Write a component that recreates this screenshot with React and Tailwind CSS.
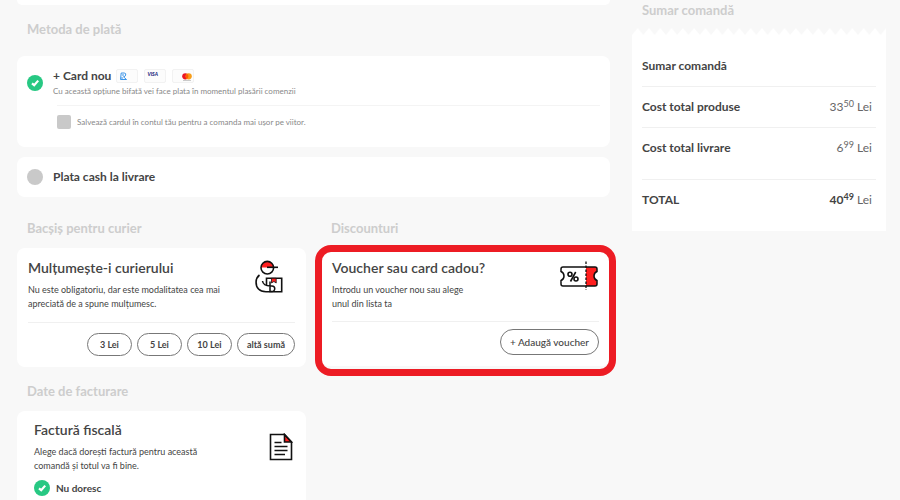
import React, { useState } from "react";

function SectionTitle({ children, className = "" }) {
  return (
    <h2 className={`px-2.5 text-[13px] leading-5 font-bold text-[#cdcdcd] ${className}`}>
      {children}
    </h2>
  );
}

function Radio({ id, name, checked, onChange }) {
  return (
    <span className="relative block size-4 shrink-0">
      <input
        id={id}
        name={name}
        type="radio"
        checked={checked}
        onChange={onChange}
        className="block size-4 appearance-none rounded-full bg-[#c9c9c9] checked:bg-[#27c883]"
      />
      {checked && (
        <svg viewBox="0 0 16 16" className="pointer-events-none absolute inset-0 size-4" aria-hidden="true">
          <path d="M5 8.300 7.200 10.200 11.200 5.600" fill="none" stroke="#fff" strokeWidth="2.200" />
        </svg>
      )}
    </span>
  );
}

function CourierIcon() {
  return (
    <svg viewBox="0 0 28 34" className="mt-0.5 h-[34px] w-7 shrink-0" fill="none" stroke="#111" strokeWidth="1.6" aria-hidden="true">
      <path d="M6 7.500a6.300 6.300 0 0 1 12.600 0Z" fill="#ff1f1f" stroke="none" />
      <circle cx="12.300" cy="7.700" r="6.300" />
      <path d="M12 7.300H23" />
      <path d="M4.500 15C0 18.500.2 25.500 3.500 29c2 2.200 4.500 2.700 7.500 2.700h15.700V18.300H11.500V25" />
      <path d="M7.500 21c.5 3.500 2.500 5 8 5M15 26v5.500h2a2.700 2.700 0 0 0 0-5.500ZM15 21.500V26" strokeWidth="1.500" />
      <path d="M16.500 18.300h4.700v4.700l-2.300-1.500-2.400 1.500Z" fill="#ff1f1f" strokeWidth=".8" />
    </svg>
  );
}

function VoucherIcon() {
  return (
    <svg viewBox="0 0 40 30" className="mt-[3px] h-[30px] w-10 shrink-0" fill="none" stroke="#111" strokeWidth="1.5" aria-hidden="true">
      <path d="M27 6h9q2 0 2 2v2.500c-4 1.500-4 7.500 0 9V23q0 2-2 2h-9Z" fill="#ff1f1f" stroke="none" />
      <path d="M4 6h32q2 0 2 2v2.500c-4 1.500-4 7.500 0 9V23q0 2-2 2H4q-2 0-2-2v-3.500c4-1.500 4-7.500 0-9V8q0-2 2-2Z" />
      <path d="M27 .5V29" strokeDasharray="2.500 1.500" strokeWidth="1.300" />
      <circle cx="11" cy="13.300" r="2" strokeWidth="1.600" />
      <circle cx="17" cy="18" r="2" strokeWidth="1.600" />
      <path d="M16.700 11 11.500 20.500" strokeWidth="1.600" />
    </svg>
  );
}

function InvoiceIcon() {
  return (
    <svg viewBox="0 0 24 28" className="h-7 w-6 shrink-0" fill="none" stroke="#111" strokeWidth="1.600" aria-hidden="true">
      <path d="M15.500 1.500V9H22.500Z" fill="#ff1f1f" />
      <path d="M1.500 1.500h14L22.500 9v17.500h-21Z" />
      <path d="M5.500 9.500h7M5.500 13.500h13M5.500 17.500h13M5.500 21.500h10.500" strokeWidth="1.400" />
    </svg>
  );
}

function CardBrands() {
  return (
    <span className="flex gap-1.5">
      <span className="flex h-3.5 w-[22px] items-center rounded-xs border border-[#f2f2f2] bg-[#fcfcfc] pl-0.5">
        <svg viewBox="0 0 8 8" className="size-2" fill="none" stroke="#2589e6" aria-hidden="true">
          <path d="M1.500 7.500 2.200 1h3q2 .2 1.500 2T4.500 4.800L7.500 7.500h-6M3 3h2M3 5v2" strokeWidth=".9" />
        </svg>
      </span>
      <span className="flex h-3.5 w-[22px] items-start rounded-xs border border-[#f2f2f2] bg-[#fcfcfc] pl-0.5 text-[5px] leading-2 font-black text-[#1d2a80] italic">
        VISA
      </span>
      <span className="flex h-3.5 w-[22px] items-center justify-end rounded-xs border border-[#f2f2f2] bg-[#fcfcfc] pr-px">
        <svg viewBox="0 0 10 9" className="h-[9px] w-2.5" aria-hidden="true">
          <circle cx="3.300" cy="4.300" r="3.100" fill="#eb1524" />
          <circle cx="6.700" cy="4.300" r="3.100" fill="#f79e1b" />
          <path d="M5 1.700a3.100 3.100 0 0 1 0 5.200 3.100 3.100 0 0 1 0-5.200" fill="#ff5f00" />
          <path d="M1 8.500h8" stroke="#999" strokeWidth=".5" />
        </svg>
      </span>
    </span>
  );
}

function SummaryRow({ label, whole, cents, strong, className = "" }) {
  return (
    <div className={`flex items-center justify-between border-t border-[#f0f0f0] pr-1 ${className}`}>
      <dt className="text-xs leading-5 font-bold">{label}</dt>
      <dd className="text-xs leading-5 text-[#666]">
        <span className={strong ? "font-bold text-[#444]" : ""}>
          {whole}
          <sup className="text-[9px]">{cents}</sup>
        </span>{" "}
        Lei
      </dd>
    </div>
  );
}

function OrderSummary() {
  return (
    <aside>
      <SectionTitle>Sumar comandă</SectionTitle>
      <svg className="mt-2 block h-[7px] w-full" aria-hidden="true">
        <defs>
          <pattern id="zigzag" width="11.300" height="7" patternUnits="userSpaceOnUse">
            <path d="M0 7 5.650 0 11.300 7Z" fill="#fff" />
          </pattern>
        </defs>
        <rect width="100%" height="7" fill="url(#zigzag)" />
      </svg>
      <div className="bg-white px-2.5 pt-[21px] pb-[21px]">
        <h3 className="pb-2.5 text-xs leading-5 font-bold">Sumar comandă</h3>
        <dl>
          <SummaryRow label="Cost total produse" whole="33" cents="50" className="py-2.5" />
          <SummaryRow label="Cost total livrare" whole="6" cents="99" className="pt-2.5 pb-[21px]" />
          <SummaryRow label="TOTAL" whole="40" cents="49" strong className="pt-2.5" />
        </dl>
      </div>
    </aside>
  );
}

const tips = ["3 Lei", "5 Lei", "10 Lei", "altă sumă"];

export default function App() {
  const [method, setMethod] = useState("card");
  const [noInvoice, setNoInvoice] = useState(true);

  return (
    <div className="flex min-h-screen gap-[22px] bg-[#f8f8f8] pr-3.5 pl-[17px] font-[Lato,sans-serif] text-[#444]">
      <main className="min-w-0 flex-1">
        <div className="h-[5px] rounded-b-lg bg-white" />
        <SectionTitle className="mt-3.5 mb-[17px]">Metoda de plată</SectionTitle>

        <section className="rounded-lg bg-white pt-3 pr-2.5 pb-[17px] pl-2.5">
          <div className="flex items-center gap-2.5">
            <Radio id="card" name="method" checked={method === "card"} onChange={() => setMethod("card")} />
            <div>
              <div className="flex items-center gap-[5px]">
                <label htmlFor="card" className="text-xs leading-4 font-bold">+ Card nou</label>
                <CardBrands />
              </div>
              <p className="text-[8px] leading-3.5 text-[#888]">
                Cu această opțiune bifată vei face plata în momentul plasării comenzii
              </p>
            </div>
          </div>
          <label className="mt-[7px] ml-[30px] flex items-center gap-1.5 border-t border-[#f4f4f4] pt-2 text-[8px] leading-4 text-[#888]">
            <input type="checkbox" className="size-3.5 appearance-none rounded-xs bg-[#c9c9c9] checked:bg-[#27c883]" />
            Salvează cardul în contul tău pentru a comanda mai ușor pe viitor.
          </label>
        </section>

        <section className="mt-2.5 flex h-10 items-center gap-2.5 rounded-lg bg-white px-2.5">
          <Radio id="cash" name="method" checked={method === "cash"} onChange={() => setMethod("cash")} />
          <label htmlFor="cash" className="text-xs leading-4 font-bold">Plata cash la livrare</label>
        </section>

        <div className="mt-[21px] grid grid-cols-2 gap-x-[15px]">
          <div>
            <SectionTitle>Bacșiș pentru curier</SectionTitle>
            <section className="mt-2.5 rounded-lg bg-white px-[11px] pt-2.5 pb-[11px]">
              <div className="flex justify-between pr-3">
                <div>
                  <h3 className="text-sm leading-5 font-semibold">Mulțumește-i curierului</h3>
                  <p className="mt-[5px] text-[9px] leading-3.5">
                    Nu este obligatoriu, dar este modalitatea cea mai
                    <br />
                    apreciată de a spune mulțumesc.
                  </p>
                </div>
                <CourierIcon />
              </div>
              <div className="mt-[11px] flex justify-end gap-[5px] border-t border-[#f0f0f0] pt-2.5">
                {tips.map((tip) => (
                  <button key={tip} type="button" className="h-[23px] min-w-[45px] rounded-full border border-[#777] px-[9px] text-[9px] leading-3 font-bold">
                    {tip}
                  </button>
                ))}
              </div>
            </section>
          </div>

          <div>
            <SectionTitle>Discounturi</SectionTitle>
            <section className="relative mt-2.5 h-[118px] rounded-lg bg-white px-[11px] pt-2.5">
              <div className="flex justify-between">
                <div>
                  <h3 className="text-sm leading-5 font-semibold">Voucher sau card cadou?</h3>
                  <p className="mt-[5px] text-[9px] leading-3.5">
                    Introdu un voucher nou sau alege
                    <br />
                    unul din lista ta
                  </p>
                </div>
                <VoucherIcon />
              </div>
              <div className="mt-2.5 flex justify-end border-t border-[#f0f0f0] pt-[7px]">
                <button type="button" className="h-[26px] rounded-full border border-[#777] px-[9px] text-[10px] leading-4 font-medium">
                  + Adaugă voucher
                </button>
              </div>
              <span className="pointer-events-none absolute -inset-x-1.5 -top-[3px] -bottom-2.5 rounded-2xl border-7 border-[#ed1c24]" />
            </section>
          </div>

          <div>
            <SectionTitle className="mt-3.5">Date de facturare</SectionTitle>
            <section className="mt-2.5 h-[89px] rounded-t-lg bg-white pt-[9px] pr-[13px] pl-[17px]">
              <div className="flex items-center justify-between">
                <div>
                  <h3 className="text-sm leading-5 font-semibold">Factură fiscală</h3>
                  <p className="mt-[5px] text-[9px] leading-3.5">
                    Alege dacă dorești factură pentru această
                    <br />
                    comandă și totul va fi bine.
                  </p>
                </div>
                <InvoiceIcon />
              </div>
              <div className="mt-[7px] flex items-center gap-1.5">
                <Radio id="no-invoice" name="invoice" checked={noInvoice} onChange={() => setNoInvoice(true)} />
                <label htmlFor="no-invoice" className="text-[10px] leading-4 font-bold">Nu doresc</label>
              </div>
            </section>
          </div>
        </div>
      </main>

      <div className="w-[254px] shrink-0">
        <OrderSummary />
      </div>
    </div>
  );
}
